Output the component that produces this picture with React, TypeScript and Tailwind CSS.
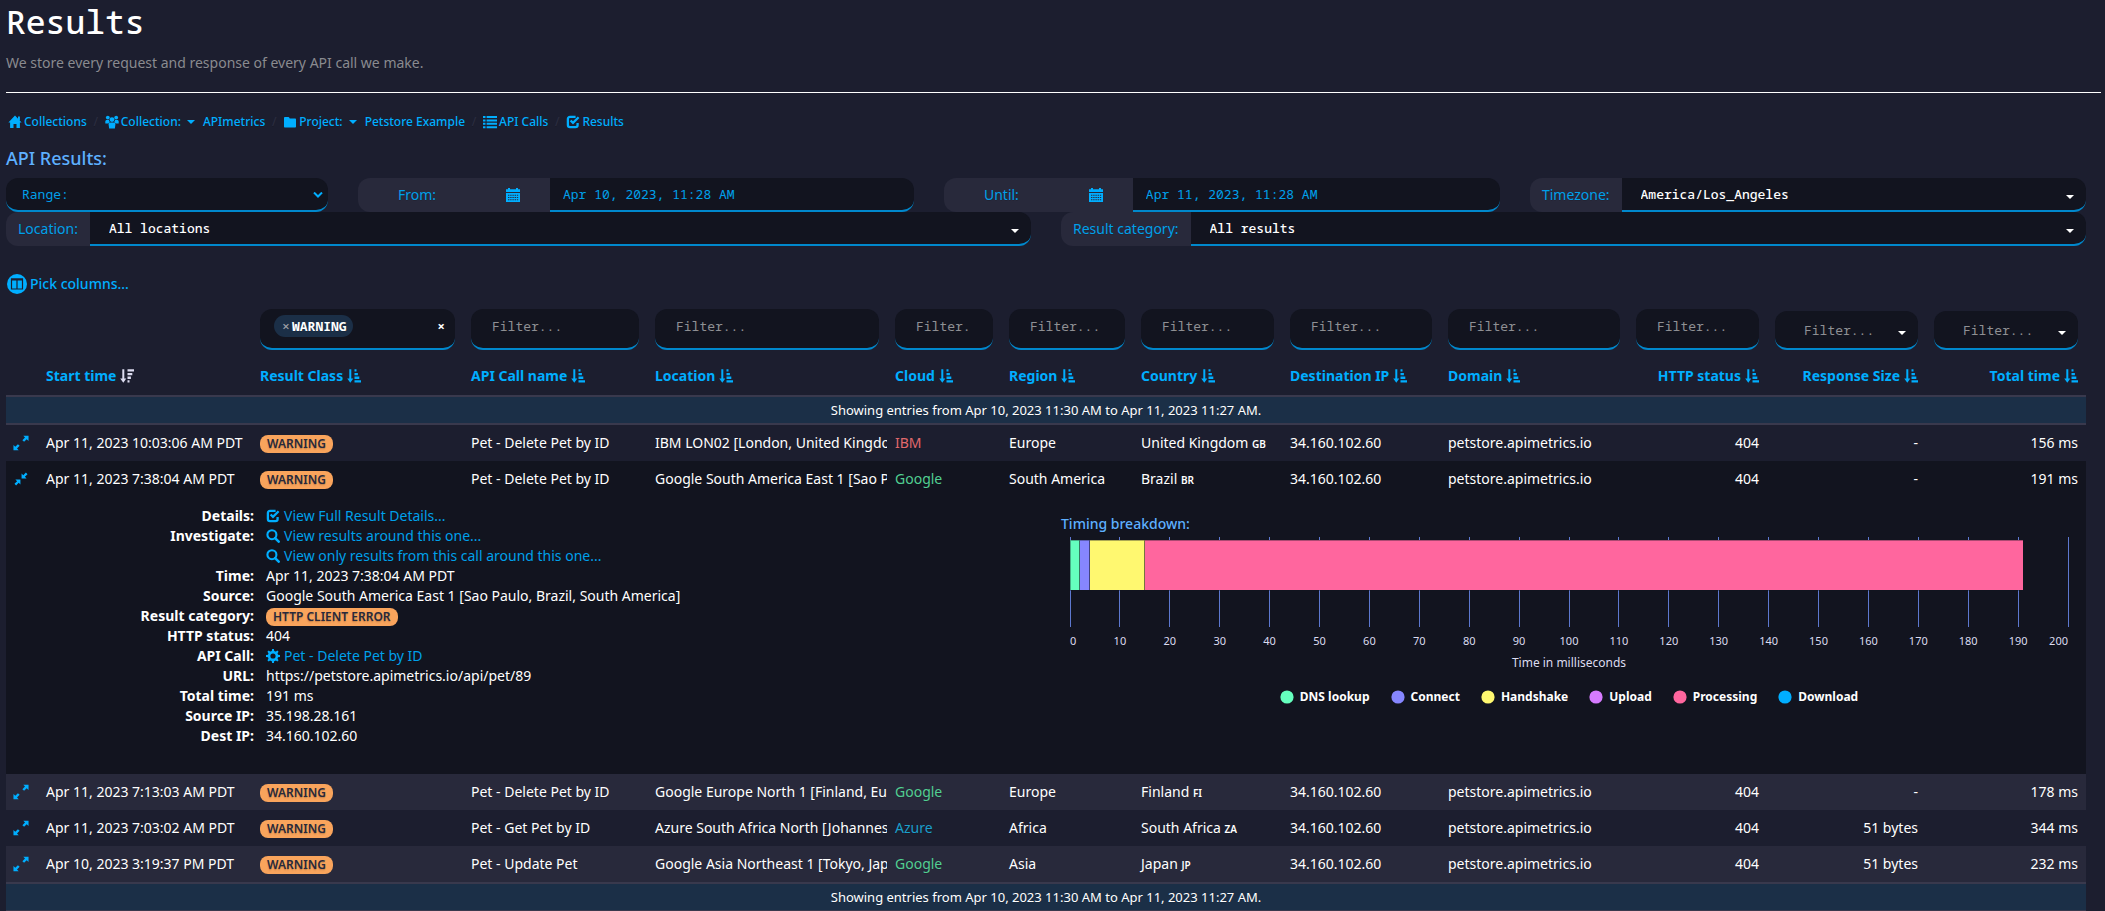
import type { ReactNode } from "react";

const MONO = "font-['Noto_Sans_Mono','DejaVu_Sans_Mono',monospace]";

type IconProps = { children: ReactNode; className?: string };

function Icon({ children, className = "size-3.5" }: IconProps) {
  return (
    <svg viewBox="0 0 14 14" fill="currentColor" aria-hidden="true" className={`shrink-0 ${className}`}>
      {children}
    </svg>
  );
}

const HomeIcon = () => (
  <Icon>
    <path d="M7 .6 13.6 7.6H11.9V13H8.5V9H5.5V13H2.1V7.6H.4Z" />
    <path d="M10 1.4h1.9v4H10z" />
  </Icon>
);

const GroupIcon = () => (
  <Icon>
    <circle cx="2.8" cy="2.6" r="1.9" />
    <circle cx="11.2" cy="2.6" r="1.9" />
    <circle cx="7" cy="4.6" r="2.4" />
    <path d="M.3 8.6V6.4C.3 5.4 1 4.9 2 4.9h1.9c.2 1 .6 1.8 1.2 2.3-.9.3-1.5.8-1.7 1.4Z" />
    <path d="M13.7 8.600V6.400c0-1-.7-1.500-1.700-1.500h-1.900c-.2 1-.6 1.800-1.200 2.300.9.3 1.500.8 1.700 1.400Z" />
    <path d="M3.600 9.400c0-1.200.8-1.900 2-1.900h2.800c1.200 0 2 .7 2 1.900l-.5 4.100H4.100Z" />
  </Icon>
);

const FolderIcon = () => (
  <Icon>
    <path d="M1 3.200c0-.7.4-1.100 1-1.100h3.300c.6 0 .9.300 1.200 1l.2.5H12c.6 0 1 .4 1 1v6.900c0 .6-.4 1-1 1H2c-.6 0-1-.4-1-1Z" />
  </Icon>
);

const ListIcon = () => (
  <Icon>
    <path d="M0 1h2.500v2H0zM0 4.400h2.500v2H0zM0 7.800h2.500v2H0zM0 11.200h2.500v2H0zM3.600 1H14v2H3.600zM3.600 4.400H14v2H3.600zM3.600 7.800H14v2H3.600zM3.600 11.200H14v2H3.600z" />
  </Icon>
);

const CheckIcon = () => (
  <Icon>
    <path
      d="M9.600 1.900H4C2.700 1.900 1.900 2.700 1.900 4v6c0 1.300.8 2.100 2.100 2.100h5.500c1.300 0 2.100-.8 2.100-2.100V8"
      fill="none"
      stroke="currentColor"
      strokeWidth="2.3"
    />
    <path d="M4.600 5.500 7 7.900l5.600-5.700" fill="none" stroke="currentColor" strokeWidth="2.300" />
  </Icon>
);

const SearchIcon = () => (
  <Icon>
    <circle cx="5.900" cy="5.700" r="4.500" fill="none" stroke="currentColor" strokeWidth="2.100" />
    <path d="m9.100 9.100 3.600 3.600" stroke="currentColor" strokeWidth="2.500" strokeLinecap="round" />
  </Icon>
);

const CogIcon = () => (
  <Icon>
    <circle cx="7" cy="7" r="3.900" fill="none" stroke="currentColor" strokeWidth="2.600" />
    <path
      d="M5.700 2.500 6.100 0h1.800l.4 2.500ZM5.700 11.500l.4 2.500h1.800l.4-2.500ZM2.500 5.700 0 6.100v1.800l2.500.4ZM11.500 5.700l2.500.4v1.800l-2.500.4ZM2.900 4.700 1.400 2.700l1.300-1.300 2 1.500ZM11.100 4.700l1.500-2-1.300-1.300-2 1.500ZM2.900 9.300l-1.500 2 1.300 1.300 2-1.500ZM11.100 9.300l1.500 2-1.300 1.300-2-1.500Z"
    />
  </Icon>
);

const CalendarIcon = () => (
  <Icon>
    <path
      fillRule="evenodd"
      d="M0 1.200h2V0h2v1.200h6V0h2v1.200h2V4H0ZM0 5h14v9H0ZM2 6.800v1h1.400v-1ZM4.200 6.800v1h1.400v-1ZM6.400 6.800v1h1.400v-1ZM8.600 6.800v1H10v-1ZM10.800 6.800v1h1.400v-1ZM2 9v1h1.400V9ZM4.200 9v1h1.400V9ZM6.400 9v1h1.400V9ZM8.600 9v1H10V9ZM10.800 9v1h1.400V9ZM2 11.200v1h1.400v-1ZM4.200 11.200v1h1.400v-1ZM6.400 11.200v1h1.400v-1ZM8.600 11.200v1H10v-1ZM10.800 11.200v1h1.400v-1Z"
    />
  </Icon>
);

const ExpandIcon = () => (
  <Icon className="size-4">
    <path d="M9 .6h4.600v4.600L12 3.700 9.700 6 8.200 4.500l2.300-2.300ZM5 13.400H.4V8.800L2 10.300 4.300 8l1.500 1.500-2.300 2.300Z" />
  </Icon>
);

const CollapseIcon = () => (
  <Icon className="size-4">
    <path d="M7.500 6.500V2.200l1.500 1.500 2.300-2.300 1.400 1.400-2.300 2.300 1.500 1.400ZM6.500 7.500v4.300L5 10.300l-2.300 2.300-1.400-1.400 2.300-2.300-1.500-1.400Z" />
  </Icon>
);

const SortIcon = ({ descending = false }: { descending?: boolean }) => (
  <Icon className={descending ? "size-3.5 text-[#dcdcf0]" : "size-3.5"}>
    <path d="M2.300.200h2v9.300h2L3.300 13.800.2 9.500h2.100z" />
    {descending ? (
      <path d="M7.500.200H14v2.300H7.500zM7.500 3.900h4.800v2.300H7.500zM7.500 7.600h3.400v2.300H7.500zM7.500 11.300h2v2.300h-2z" />
    ) : (
      <path d="M7.500.200h2v2.300h-2zM7.500 3.900h3.400v2.300H7.500zM7.500 7.600h4.800v2.300H7.500zM7.500 11.300H14v2.300H7.500z" />
    )}
  </Icon>
);

const Caret = ({ className = "" }: { className?: string }) => (
  <svg viewBox="0 0 8 4" fill="currentColor" aria-hidden="true" className={`h-1 w-2 shrink-0 ${className}`}>
    <path d="M0 0h8L4 4Z" />
  </svg>
);

const Crumb = ({ icon, children }: { icon: ReactNode; children: ReactNode }) => (
  <a href="#" className="flex items-center gap-0.5">
    {icon}
    {children}
  </a>
);

const Slash = () => (
  <li aria-hidden="true" className="w-[18px] text-center text-[#2b2d40]">
    /
  </li>
);

const FIELD = "h-[34px] border-b-2 border-[#0088cc] bg-[#12141f] text-[13px]";
const ADDON = "flex h-[34px] shrink-0 items-center bg-[#28293b] text-[#00a0ea]";

function DateField({ id, label, value }: { id: string; label: string; value: string }) {
  return (
    <div className="flex">
      <label htmlFor={id} className={`${ADDON} rounded-l-xl px-10`}>
        {label}
      </label>
      <button type="button" aria-label={`${label} open calendar`} className={`${ADDON} px-[30px] text-[#00aeff]`}>
        <CalendarIcon />
      </button>
      <input
        id={id}
        type="text"
        defaultValue={value}
        className={`${FIELD} ${MONO} min-w-0 flex-1 rounded-r-xl px-[13px] text-[#00a0ea]`}
      />
    </div>
  );
}

function PickField({ id, label, value }: { id: string; label: string; value: string }) {
  return (
    <div className="flex">
      <label htmlFor={id} className={`${ADDON} rounded-l-xl px-3`}>
        {label}
      </label>
      <div className="relative flex-1">
        <select id={id} className={`${FIELD} ${MONO} w-full appearance-none rounded-r-xl px-[19px] font-medium text-white`}>
          <option>{value}</option>
        </select>
        <Caret className="pointer-events-none absolute top-[17px] right-3 text-white" />
      </div>
    </div>
  );
}

type Column = {
  title: string;
  width: string;
  filter: "none" | "tag" | "text" | "select";
  right?: boolean;
};

const columns: Column[] = [
  { title: "Start time", width: "w-[214px]", filter: "none" },
  { title: "Result Class", width: "w-[211px]", filter: "tag" },
  { title: "API Call name", width: "w-[184px]", filter: "text" },
  { title: "Location", width: "w-[240px]", filter: "text" },
  { title: "Cloud", width: "w-[114px]", filter: "text" },
  { title: "Region", width: "w-[132px]", filter: "text" },
  { title: "Country", width: "w-[149px]", filter: "text" },
  { title: "Destination IP", width: "w-[158px]", filter: "text" },
  { title: "Domain", width: "w-[188px]", filter: "text" },
  { title: "HTTP status", width: "w-[139px]", filter: "text", right: true },
  { title: "Response Size", width: "w-[159px]", filter: "select", right: true },
  { title: "Total time", width: "w-[160px]", filter: "select", right: true },
];

const FILTER = "w-full rounded-xl border-b-2 border-[#0088cc] bg-[#12141f] text-[13px]";

function FilterBox({ column }: { column: Column }) {
  const label = `Filter ${column.title}`;
  if (column.filter === "none") return null;
  if (column.filter === "tag") {
    return (
      <div className={`${FILTER} ${MONO} flex h-[41px] items-start justify-between pt-1.5 pr-2.5 pl-[14px]`}>
        <span className="flex h-[22px] items-center rounded-full bg-[#1b2f47] px-1.5 font-bold text-white">
          <button type="button" aria-label="Remove WARNING" className="w-3 text-center font-medium text-[#a0a0a8]">
            ×
          </button>
          WARNING
        </span>
        <button type="button" aria-label="Clear filter" className="h-[22px] font-bold text-white">
          ×
        </button>
      </div>
    );
  }
  if (column.filter === "select") {
    return (
      <div className="relative">
        <select aria-label={label} className={`${FILTER} ${MONO} block h-[39px] appearance-none pr-6 pl-[29px] text-[#8f9094]`}>
          <option>Filter...</option>
        </select>
        <Caret className="pointer-events-none absolute top-5 right-3 text-white" />
      </div>
    );
  }
  return (
    <input
      type="text"
      aria-label={label}
      placeholder="Filter..."
      className={`${FILTER} ${MONO} block h-[41px] px-[21px] pb-1.5 text-white placeholder:text-[#8f9094]`}
    />
  );
}

type Result = {
  time: string;
  call: string;
  location: string;
  cloud: string;
  region: string;
  country: string;
  code: string;
  size: string;
  total: string;
  bg: string;
  open?: boolean;
};

const results: Result[] = [
  { time: "Apr 11, 2023 10:03:06 AM PDT", call: "Pet - Delete Pet by ID", location: "IBM LON02 [London, United Kingdom, Europe]", cloud: "IBM", region: "Europe", country: "United Kingdom", code: "GB", size: "-", total: "156 ms", bg: "" },
  { time: "Apr 11, 2023 7:38:04 AM PDT", call: "Pet - Delete Pet by ID", location: "Google South America East 1 [Sao Paulo, Brazil, South America]", cloud: "Google", region: "South America", country: "Brazil", code: "BR", size: "-", total: "191 ms", bg: "bg-[#12141f]", open: true },
  { time: "Apr 11, 2023 7:13:03 AM PDT", call: "Pet - Delete Pet by ID", location: "Google Europe North 1 [Finland, Europe]", cloud: "Google", region: "Europe", country: "Finland", code: "FI", size: "-", total: "178 ms", bg: "bg-[#28293b]" },
  { time: "Apr 11, 2023 7:03:02 AM PDT", call: "Pet - Get Pet by ID", location: "Azure South Africa North [Johannesburg, South Africa]", cloud: "Azure", region: "Africa", country: "South Africa", code: "ZA", size: "51 bytes", total: "344 ms", bg: "" },
  { time: "Apr 10, 2023 3:19:37 PM PDT", call: "Pet - Update Pet", location: "Google Asia Northeast 1 [Tokyo, Japan, Asia]", cloud: "Google", region: "Asia", country: "Japan", code: "JP", size: "51 bytes", total: "232 ms", bg: "bg-[#28293b]" },
];

const cloudColor: Record<string, string> = {
  IBM: "text-[#e0696d]",
  Google: "text-[#52cf92]",
  Azure: "text-[#1b9fcb]",
};

const Badge = ({ children }: { children: ReactNode }) => (
  <span className="inline-flex h-[18px] items-center rounded-lg bg-[#f9a45c] px-[7px] text-[12px] font-semibold text-[#28293b] text-shadow-sm">
    {children}
  </span>
);

function RangeRow() {
  return (
    <tr className="bg-[#1b2f47] text-[13px] text-white">
      <td colSpan={13} className="h-[30px] border-y-2 border-[#39394d] p-0 text-center leading-[26px]">
        Showing entries from Apr 10, 2023 11:30 AM to Apr 11, 2023 11:27 AM.
      </td>
    </tr>
  );
}

const segments = [
  { name: "DNS lookup", from: 0, to: 2, color: "#65ffbe" },
  { name: "Connect", from: 2, to: 4, color: "#8686ff" },
  { name: "Handshake", from: 4, to: 15, color: "#fff870" },
  { name: "Upload", from: 15, to: 15, color: "#d67bff" },
  { name: "Processing", from: 15, to: 191, color: "#ff669e" },
  { name: "Download", from: 191, to: 191, color: "#00aeff" },
];

const ticks = Array.from({ length: 21 }, (_, i) => i * 10);

function TimingChart() {
  return (
    <section>
      <h3 className="text-[14px] leading-5 font-medium text-[#5eb0ff]">Timing breakdown:</h3>
      <svg className="mt-[3px] ml-[9px] block h-[136px] w-[calc(100%-27px)] overflow-visible" role="img" aria-label="Timing breakdown">
        {ticks.map((t) => (
          <line key={t} x1={`${t / 2}%`} x2={`${t / 2}%`} y1="0" y2="90" stroke="#5d78cf" shapeRendering="crispEdges" />
        ))}
        {segments
          .filter((s) => s.to > s.from)
          .map((s) => (
            <rect
              key={s.name}
              x={`${s.from / 2}%`}
              width={`${(s.to - s.from) / 2}%`}
              y="3"
              height="50"
              fill={s.color}
              stroke="#12141f"
              strokeOpacity="0.35"
              shapeRendering="crispEdges"
            />
          ))}
        {ticks.map((t) => (
          <text
            key={t}
            x={`${t / 2}%`}
            y="108"
            fontSize="11"
            fill="#dcdcf0"
            textAnchor={t === 0 ? "start" : t === 200 ? "end" : "middle"}
          >
            {t}
          </text>
        ))}
        <text x="50%" y="130" fontSize="12" fill="#dcdcf0" textAnchor="middle">
          Time in milliseconds
        </text>
      </svg>
      <ul className="mt-[14px] mr-[18px] ml-[9px] flex justify-center gap-[21px] text-[12px] leading-5 font-bold text-white">
        {segments.map((s) => (
          <li key={s.name} className="flex items-center gap-1.5">
            <svg viewBox="0 0 14 14" aria-hidden="true" className="size-3.5">
              <circle cx="7" cy="7" r="6.600" fill={s.color} />
            </svg>
            {s.name}
          </li>
        ))}
      </ul>
    </section>
  );
}

const Term = ({ label, children }: { label: string; children: ReactNode }) => (
  <>
    <dt className="text-right font-bold">{label}</dt>
    <dd>{children}</dd>
  </>
);

const IconLink = ({ icon, children }: { icon: ReactNode; children: ReactNode }) => (
  <a href="#" className="flex w-max items-center gap-1 text-[#00a0ea]">
    <span className="text-[#00aeff]">{icon}</span>
    {children}
  </a>
);

function DetailRow() {
  return (
    <tr className="bg-[#12141f] text-white">
      <td colSpan={13} className="p-0 pt-[9px] pb-7">
        <div className="grid grid-cols-2 gap-[30px]">
          <dl className="grid grid-cols-[248px_1fr] content-start gap-x-3 leading-5">
            <Term label="Details:">
              <IconLink icon={<CheckIcon />}>View Full Result Details...</IconLink>
            </Term>
            <Term label="Investigate:">
              <IconLink icon={<SearchIcon />}>View results around this one...</IconLink>
              <IconLink icon={<SearchIcon />}>View only results from this call around this one...</IconLink>
            </Term>
            <Term label="Time:">Apr 11, 2023 7:38:04 AM PDT</Term>
            <Term label="Source:">Google South America East 1 [Sao Paulo, Brazil, South America]</Term>
            <Term label="Result category:">
              <span className="flex h-5 items-end">
                <Badge>HTTP CLIENT ERROR</Badge>
              </span>
            </Term>
            <Term label="HTTP status:">404</Term>
            <Term label="API Call:">
              <IconLink icon={<CogIcon />}>Pet - Delete Pet by ID</IconLink>
            </Term>
            <Term label="URL:">https://petstore.apimetrics.io/api/pet/89</Term>
            <Term label="Total time:">191 ms</Term>
            <Term label="Source IP:">35.198.28.161</Term>
            <Term label="Dest IP:">34.160.102.60</Term>
          </dl>
          <div className="pt-2">
            <TimingChart />
          </div>
        </div>
      </td>
    </tr>
  );
}

const CELL = "h-9 overflow-hidden px-2 py-0 whitespace-nowrap";

function ResultRow({ r }: { r: Result }) {
  return (
    <tr className={`${r.bg} text-white`}>
      <td className="p-0 pl-[7px]">
        <button type="button" aria-label={r.open ? "Collapse row" : "Expand row"} className="block text-[#00aeff]">
          {r.open ? <CollapseIcon /> : <ExpandIcon />}
        </button>
      </td>
      <td className={CELL}>{r.time}</td>
      <td className={CELL}>
        <span className="flex pt-0.5">
          <Badge>WARNING</Badge>
        </span>
      </td>
      <td className={CELL}>{r.call}</td>
      <td className={CELL}>{r.location}</td>
      <td className={`${CELL} ${cloudColor[r.cloud]}`}>{r.cloud}</td>
      <td className={CELL}>{r.region}</td>
      <td className={CELL}>
        {r.country} <span className="text-[10px] font-semibold">{r.code}</span>
      </td>
      <td className={CELL}>34.160.102.60</td>
      <td className={CELL}>petstore.apimetrics.io</td>
      <td className={`${CELL} text-right`}>404</td>
      <td className={`${CELL} text-right`}>{r.size}</td>
      <td className={`${CELL} text-right`}>{r.total}</td>
    </tr>
  );
}

export default function App() {
  return (
    <div className="min-h-screen bg-[#1c1e2f] pr-1 pl-1.5 font-['Noto_Sans',sans-serif] text-[14px] leading-5 text-shadow-2xs">
      <header className="border-b border-white pb-[19px]">
        <h1 className={`${MONO} text-[33px] leading-[44px] font-medium text-white`}>Results</h1>
        <p className="mt-[9px] text-[#8a8b90]">We store every request and response of every API call we make.</p>
      </header>

      <main className="mr-[15px]">
        <nav aria-label="Breadcrumb" className="pt-[19px] pl-0.5 text-[12px] font-medium text-[#00aeff]">
          <ol className="flex items-center">
            <li>
              <Crumb icon={<HomeIcon />}>Collections</Crumb>
            </li>
            <Slash />
            <li className="flex items-center gap-2">
              <Crumb icon={<GroupIcon />}>
                Collection: <Caret className="ml-1" />
              </Crumb>
              <a href="#">APImetrics</a>
            </li>
            <Slash />
            <li className="flex items-center gap-2">
              <Crumb icon={<FolderIcon />}>
                Project: <Caret className="ml-1" />
              </Crumb>
              <a href="#">Petstore Example</a>
            </li>
            <Slash />
            <li>
              <Crumb icon={<ListIcon />}>API Calls</Crumb>
            </li>
            <Slash />
            <li>
              <Crumb icon={<CheckIcon />}>Results</Crumb>
            </li>
          </ol>
        </nav>

        <h2 className="mt-3.5 text-[18px] leading-6 font-medium text-[#5eb0ff]">API Results:</h2>

        <form className="mt-2">
          <div className="grid grid-cols-[11fr_19fr_19fr_19fr] gap-[30px]">
            <div className="relative">
              <select aria-label="Range" className={`${FIELD} ${MONO} w-full appearance-none rounded-xl px-4 text-[#00a0ea]`}>
                <option>Range:</option>
              </select>
              <svg
                viewBox="0 0 10 6"
                fill="none"
                stroke="#00aeff"
                strokeWidth="2"
                aria-hidden="true"
                className="pointer-events-none absolute top-3.5 right-[5px] h-1.5 w-2.5"
              >
                <path d="m1 .5 4 4 4-4" />
              </svg>
            </div>
            <DateField id="from" label="From:" value="Apr 10, 2023, 11:28 AM" />
            <DateField id="until" label="Until:" value="Apr 11, 2023, 11:28 AM" />
            <PickField id="timezone" label="Timezone:" value="America/Los_Angeles" />
          </div>
          <div className="grid grid-cols-2 gap-[30px]">
            <PickField id="location" label="Location:" value="All locations" />
            <PickField id="category" label="Result category:" value="All results" />
          </div>
        </form>

        <button type="button" className="mt-7 ml-px flex items-center gap-[3px] font-medium text-[#00aeff]">
          <svg viewBox="0 0 20 20" aria-hidden="true" className="size-5">
            <circle cx="10" cy="10" r="10" fill="currentColor" />
            <path d="M4.500 5h11v10h-11ZM10 6v9" fill="none" stroke="#1c1e2f" strokeWidth="1.200" />
            <path d="M4 5.500h12" stroke="#1c1e2f" strokeWidth="2" />
          </svg>
          Pick columns...
        </button>

        <table className="mt-[7px] w-full table-fixed border-separate border-spacing-0 text-left">
          <colgroup>
            <col className="w-[32px]" />
            {columns.map((c) => (
              <col key={c.title} className={c.width} />
            ))}
          </colgroup>
          <thead>
            <tr>
              <td />
              {columns.map((c) => (
                <td key={c.title} className="px-2 pt-2 pb-[7px] align-bottom">
                  <FilterBox column={c} />
                </td>
              ))}
            </tr>
            <tr>
              <td />
              {columns.map((c, i) => (
                <th key={c.title} scope="col" className="px-2 pt-[9px] pb-[9px] text-[#00aeff]">
                  <button
                    type="button"
                    className={`flex w-full items-center gap-1 font-bold whitespace-nowrap ${c.right ? "justify-end" : "justify-start"}`}
                  >
                    {c.title}
                    <SortIcon descending={i === 0} />
                  </button>
                </th>
              ))}
            </tr>
          </thead>
          <tbody>
            <RangeRow />
            {results.map((r) => [<ResultRow key={r.time} r={r} />, r.open && <DetailRow key={`${r.time} details`} />])}
            <RangeRow />
          </tbody>
        </table>
      </main>
    </div>
  );
}
